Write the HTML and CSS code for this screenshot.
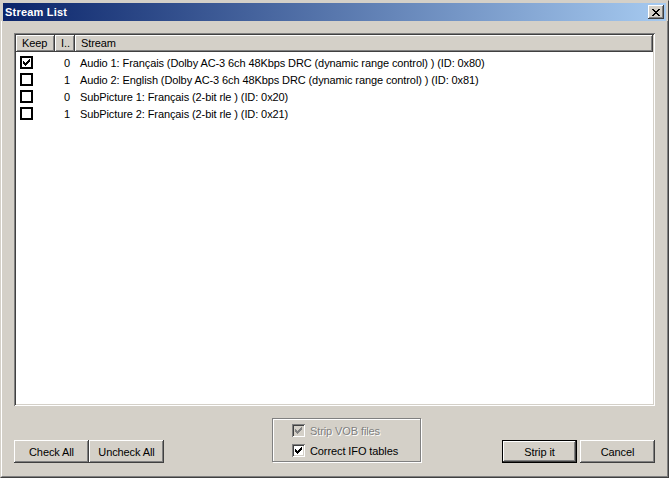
FILE: index.html
```html
<!DOCTYPE html>
<html lang="fr">
<head>
  <meta charset="UTF-8">
  <title>Stream List</title>
  <link rel="stylesheet" href="styles.css">
</head>
<body>

<div class="window">
  <div class="titlebar">
    <span class="title">Stream List</span>
    <button class="close-btn">
      <svg width="8" height="7" viewBox="0 0 8 7" shape-rendering="crispEdges">
        <path d="M0 0h2v1h-2zM6 0h2v1h-2zM1 1h2v1h-2zM5 1h2v1h-2zM2 2h4v1h-4zM3 3h2v1h-2zM2 4h4v1h-4zM1 5h2v1h-2zM5 5h2v1h-2zM0 6h2v1h-2zM6 6h2v1h-2z" fill="#000"/>
      </svg>
    </button>
  </div>

  <div class="content">
    <div class="listview">
      <div class="lv-header">
        <div class="lv-col col-keep">Keep</div>
        <div class="lv-col col-id">I..</div>
        <div class="lv-col col-stream">Stream</div>
      </div>
      <div class="lv-body" id="rows"></div>
    </div>

    <div class="footer">
      <div class="btn-group">
        <button class="btn">Check All</button>
        <button class="btn">Uncheck All</button>
      </div>

      <div class="groupbox">
        <label class="opt disabled">
          <span class="cb cb-3d checked"></span>Strip VOB files
        </label>
        <label class="opt">
          <span class="cb cb-3d checked"></span>Correct IFO tables
        </label>
      </div>

      <div class="btn-group right">
        <button class="btn default">Strip it</button>
        <button class="btn">Cancel</button>
      </div>
    </div>
  </div>
</div>

<script>
  // flux du DVD
  const streams = [
    { keep: true,  id: 0, name: 'Audio 1: Français (Dolby AC-3 6ch 48Kbps DRC (dynamic range control) ) (ID: 0x80)' },
    { keep: false, id: 1, name: 'Audio 2: English (Dolby AC-3 6ch 48Kbps DRC (dynamic range control) ) (ID: 0x81)' },
    { keep: false, id: 0, name: 'SubPicture 1: Français (2-bit rle ) (ID: 0x20)' },
    { keep: false, id: 1, name: 'SubPicture 2: Français (2-bit rle ) (ID: 0x21)' }
  ];

  const rows = document.getElementById('rows');
  streams.forEach((s) => {
    const row = document.createElement('div');
    row.className = 'lv-row';
    row.innerHTML = `
      <div class="col-keep"><span class="cb cb-flat${s.keep ? ' checked' : ''}"></span></div>
      <div class="col-id">${s.id}</div>
      <div class="col-stream">${s.name}</div>
    `;
    rows.appendChild(row);
  });
</script>

</body>
</html>
```

FILE: styles.css
```css
body {
  margin: 0;
  padding: 0;
  font-family: 'Liberation Sans', Arial, sans-serif;
  font-size: 11px;
  letter-spacing: -0.1px;
  color: #000;
  background-color: #d4d0c8;
}
.window {
  width: 669px;
  height: 478px;
  box-sizing: border-box;
  background-color: #d4d0c8;
  border: 1px solid;
  border-color: #d4d0c8 #404040 #404040 #d4d0c8;
  display: flex;
  flex-direction: column;
}
.titlebar {
  margin: 2px 2px 0 2px;
  height: 18px;
  background: linear-gradient(to right, #0a246a, #a6caf0);
  display: flex;
  align-items: center;
  justify-content: space-between;
  padding: 0 2px 0 2px;
}
.title {
  color: #fff;
  font-weight: bold;
  font-size: 11px;
  letter-spacing: 0.2px;
}
.close-btn {
  width: 16px;
  height: 14px;
  padding: 0;
  background-color: #d4d0c8;
  border: none;
  box-shadow: inset -1px -1px #404040, inset 1px 1px #fff, inset -2px -2px #808080;
  display: flex;
  align-items: center;
  justify-content: center;
}
.content {
  flex: 1;
  display: flex;
  flex-direction: column;
  padding: 12px 12px 13px 12px;
  border-left: 1px solid #fff;
  border-right: 1px solid #808080;
  border-bottom: 1px solid #808080;
}
.listview {
  height: 373px;
  background-color: #fff;
  box-shadow: inset 1px 1px #808080, inset -1px -1px #fff, inset 2px 2px #404040, inset -2px -2px #d4d0c8;
  padding: 2px;
  box-sizing: border-box;
  display: flex;
  flex-direction: column;
}
.lv-header {
  display: flex;
  height: 17px;
}
.lv-col {
  background-color: #d4d0c8;
  box-sizing: border-box;
  padding: 2px 0 0 6px;
  box-shadow: inset -1px -1px #404040, inset 1px 1px #fff, inset -2px -2px #808080;
}
.lv-col.col-keep {
  width: 39px;
}
.lv-col.col-id {
  width: 20px;
  padding-left: 6px;
}
.lv-col.col-stream {
  flex: 1;
}
.lv-body {
  padding-top: 2px;
}
.lv-row {
  display: flex;
  align-items: center;
  height: 17px;
}
.lv-row .col-keep {
  width: 39px;
  padding-left: 4px;
  box-sizing: border-box;
  display: flex;
}
.lv-row .col-id {
  width: 20px;
  text-align: right;
  padding-right: 5px;
  box-sizing: border-box;
}
.lv-row .col-stream {
  padding-left: 5px;
  white-space: nowrap;
}
.cb {
  width: 13px;
  height: 13px;
  box-sizing: border-box;
  background-color: #fff;
  display: inline-block;
  position: relative;
  flex-shrink: 0;
}
.cb-flat {
  border: 2px solid #000;
}
.cb-3d {
  box-shadow: inset 1px 1px #808080, inset -1px -1px #fff, inset 2px 2px #404040, inset -2px -2px #d4d0c8;
  margin-right: 5px;
}
.cb.checked::after {
  content: '';
  position: absolute;
  left: 3px;
  top: 3px;
  width: 7px;
  height: 7px;
  background: linear-gradient(#000, #000) 0 2px / 1px 3px no-repeat,
              linear-gradient(#000, #000) 1px 3px / 1px 3px no-repeat,
              linear-gradient(#000, #000) 2px 4px / 1px 3px no-repeat,
              linear-gradient(#000, #000) 3px 3px / 1px 3px no-repeat,
              linear-gradient(#000, #000) 4px 2px / 1px 3px no-repeat,
              linear-gradient(#000, #000) 5px 1px / 1px 3px no-repeat,
              linear-gradient(#000, #000) 6px 0 / 1px 3px no-repeat;
}
.cb-flat.checked::after {
  left: 1px;
  top: 1px;
}
.footer {
  flex: 1;
  display: flex;
  align-items: flex-end;
}
.btn-group {
  display: flex;
  gap: 0;
}
.btn-group.right {
  margin-left: auto;
  gap: 3px;
}
.btn {
  width: 75px;
  height: 23px;
  padding: 0;
  font-family: 'Liberation Sans', Arial, sans-serif;
  font-size: 11px;
  letter-spacing: -0.1px;
  color: #000;
  background-color: #d4d0c8;
  border: none;
  box-shadow: inset -1px -1px #404040, inset 1px 1px #fff, inset -2px -2px #808080;
}
.btn.default {
  box-shadow: inset 0 0 0 1px #000, inset -2px -2px #404040, inset 2px 2px #fff, inset -3px -3px #808080;
}
.groupbox {
  margin-left: 108px;
  margin-bottom: 1px;
  width: 149px;
  height: 44px;
  box-sizing: border-box;
  border: 1px solid #808080;
  box-shadow: 1px 1px #fff, inset 1px 1px #fff;
  padding: 5px 0 0 19px;
  display: flex;
  flex-direction: column;
  gap: 7px;
}
.opt {
  display: flex;
  align-items: center;
  height: 13px;
}
.opt.disabled {
  color: #808080;
  text-shadow: 1px 1px #fff;
}
.opt.disabled .cb {
  background-color: #d4d0c8;
}
.opt.disabled .cb.checked::after {
  filter: invert(50%);
}
```
